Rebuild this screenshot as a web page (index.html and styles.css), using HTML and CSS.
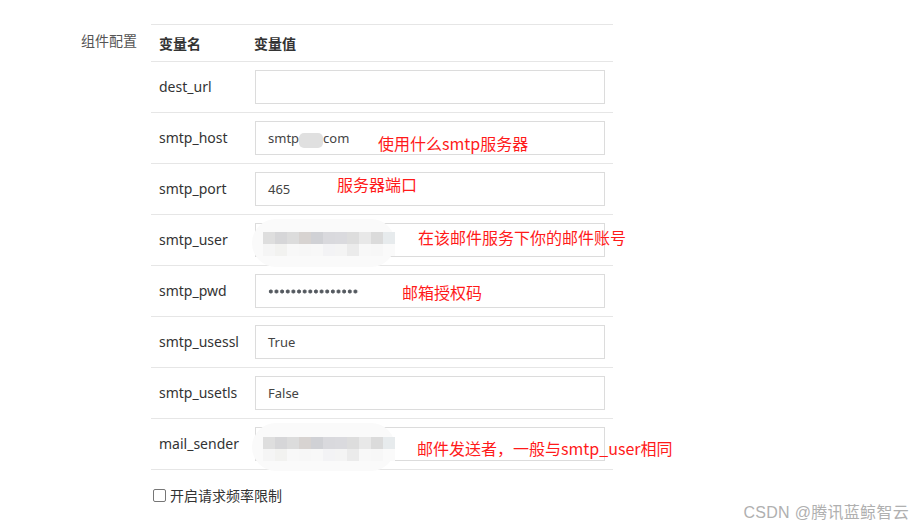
FILE: index.html
```html
<!DOCTYPE html>
<html lang="zh">
<head>
<meta charset="utf-8">
<link rel="stylesheet" href="styles.css">
</head>
<body>
<div class="page">
  <div class="form-row">
    <div class="form-label">组件配置</div>
    <div class="form-body">
      <div class="vtable">
        <div class="vrow head">
          <div class="cname">变量名</div>
          <div class="cval">变量值</div>
        </div>
        <div class="vrow">
          <div class="cname">dest_url</div>
          <div class="cval"><div class="field"></div></div>
        </div>
        <div class="vrow">
          <div class="cname">smtp_host</div>
          <div class="cval"><div class="field">smtp<span class="smudge"></span>com</div></div>
          <div class="note n-host">使用什么smtp服务器</div>
        </div>
        <div class="vrow">
          <div class="cname">smtp_port</div>
          <div class="cval"><div class="field">465</div></div>
          <div class="note n-port">服务器端口</div>
        </div>
        <div class="vrow">
          <div class="cname">smtp_user</div>
          <div class="cval"><div class="field"></div></div>
          <div class="blur b-user">
            <div class="px-row">
              <i style="background:#dedede"></i><i style="background:#d6d6d8"></i><i style="background:#dcdcdc"></i><i style="background:#d7d3d1"></i><i style="background:#d0d1d5"></i><i style="background:#d9d9dd"></i><i style="background:#dadade"></i><i style="background:#dddddd"></i><i style="background:#e8e8e8"></i><i style="background:#dbdbdb"></i><i style="background:#e7ebed"></i>
            </div>
            <div class="px-row">
              <i style="background:#f5f5f5"></i><i style="background:#f2f2f0"></i><i style="background:#f8f8f8"></i><i style="background:#f7f7f7"></i><i style="background:#f8f8f8"></i><i style="background:#f3f3f5"></i><i style="background:#f4f4f4"></i><i style="background:#ebebeb"></i><i style="background:#f8f8f8"></i><i style="background:#f7f7f7"></i><i style="background:#fafafa"></i>
            </div>
          </div>
          <div class="note n-user">在该邮件服务下你的邮件账号</div>
        </div>
        <div class="vrow">
          <div class="cname">smtp_pwd</div>
          <div class="cval"><div class="field"><span class="dots" aria-label="password"></span></div></div>
          <div class="note n-pwd">邮箱授权码</div>
        </div>
        <div class="vrow">
          <div class="cname">smtp_usessl</div>
          <div class="cval"><div class="field">True</div></div>
        </div>
        <div class="vrow">
          <div class="cname">smtp_usetls</div>
          <div class="cval"><div class="field">False</div></div>
        </div>
        <div class="vrow">
          <div class="cname">mail_sender</div>
          <div class="cval"><div class="field"></div></div>
          <div class="blur b-sender">
            <div class="px-row">
              <i style="background:#dedede"></i><i style="background:#d6d6d8"></i><i style="background:#dcdcdc"></i><i style="background:#d7d3d1"></i><i style="background:#d0d1d5"></i><i style="background:#d9d9dd"></i><i style="background:#dadade"></i><i style="background:#dddddd"></i><i style="background:#e8e8e8"></i><i style="background:#dbdbdb"></i><i style="background:#e7ebed"></i>
            </div>
            <div class="px-row">
              <i style="background:#f5f5f5"></i><i style="background:#f2f2f0"></i><i style="background:#f8f8f8"></i><i style="background:#f7f7f7"></i><i style="background:#f8f8f8"></i><i style="background:#f3f3f5"></i><i style="background:#f4f4f4"></i><i style="background:#ebebeb"></i><i style="background:#f8f8f8"></i><i style="background:#f7f7f7"></i><i style="background:#fafafa"></i>
            </div>
          </div>
          <div class="note n-sender">邮件发送者，一般与smtp_user相同</div>
        </div>
      </div>
      <label class="check">
        <span class="box"></span>
        <span class="check-text">开启请求频率限制</span>
      </label>
    </div>
  </div>
  <div class="watermark">CSDN @腾讯蓝鲸智云</div>
</div>
</body>
</html>
```

FILE: styles.css
```css
* { box-sizing: border-box; }
html, body {
  margin: 0;
  padding: 0;
  background: #ffffff;
}
body {
  font-family: "Noto Sans", "Noto Sans CJK SC", sans-serif;
  color: #333333;
  width: 915px;
  height: 527px;
  overflow: hidden;
}
.page {
  position: relative;
  width: 915px;
  height: 527px;
  padding-top: 24px;
}
.form-row {
  display: flex;
  align-items: flex-start;
}
.form-label {
  width: 151px;
  padding-left: 81px;
  font-size: 14px;
  line-height: 32px;
  color: #555555;
  font-family: "Noto Sans CJK SC", sans-serif;
}
.form-body {
  width: 462px;
}
.vtable {
  border-top: 1px solid #e6e6e6;
}
.vrow {
  position: relative;
  display: flex;
  align-items: center;
  height: 51px;
  border-bottom: 1px solid #e6e6e6;
}
.vrow.head {
  height: 37px;
  font-weight: bold;
  font-family: "Noto Sans CJK SC", sans-serif;
  color: #333333;
}
.cname {
  width: 104px;
  padding-left: 8px;
  font-size: 14px;
  line-height: 20px;
  color: #333333;
  margin-top: -1px;
}
.head .cname, .head .cval { font-size: 14px; line-height: 34px; margin-top: 0; }
.head .cval { margin-left: -1px; }
.cval {
  flex: 1;
}
.field {
  width: 350px;
  height: 34px;
  border: 1px solid #dcdcdc;
  padding-left: 12px;
  font-size: 13px;
  line-height: 32px;
  color: #444444;
  display: flex;
  align-items: center;
}
.smudge {
  display: inline-block;
  width: 24px;
  height: 15px;
  background: #e0e0e0;
  border-radius: 5px;
  margin-top: 4px;
}
.dots {
  display: block;
  width: 91px;
  height: 5px;
  background-image: radial-gradient(circle, #555a60 1.6px, rgba(85,90,96,0.5) 2px, transparent 2.4px);
  background-size: 5.65px 5px;
  background-repeat: repeat-x;
  margin-top: 1px;
}
.note {
  position: absolute;
  font-size: 16px;
  line-height: 20px;
  color: #ff1a1a;
  font-family: "Noto Sans CJK SC", sans-serif;
  white-space: nowrap;
}
.n-host { left: 227px; top: 20px; }
.n-port { left: 186px; top: 10px; }
.n-user { left: 267px; top: 12px; }
.n-pwd { left: 251px; top: 16px; }
.n-sender { left: 266px; top: 19px; }
.blur {
  position: absolute;
  left: 101px;
  top: 4px;
  width: 143px;
  height: 48px;
  border-radius: 24px;
  background: #fafafa;
  padding-left: 11px;
  padding-top: 13px;
}
.b-sender { padding-top: 14px; }
.px-row {
  display: flex;
  height: 12px;
}
.px-row i {
  display: block;
  width: 12px;
  height: 12px;
}
.check {
  display: flex;
  align-items: center;
  margin-top: 15px;
  padding-left: 2px;
}
.box {
  width: 13px;
  height: 13px;
  border: 1px solid #767676;
  border-radius: 2px;
  background: #ffffff;
}
.check-text {
  margin-left: 4px;
  font-size: 14px;
  color: #333333;
  font-family: "Noto Sans CJK SC", sans-serif;
}
.watermark {
  position: absolute;
  right: 6px;
  bottom: 4px;
  font-size: 16px;
  color: #b0b0b0;
  font-family: "Liberation Sans", "Noto Sans CJK SC", sans-serif;
  letter-spacing: 0.3px;
}
```
